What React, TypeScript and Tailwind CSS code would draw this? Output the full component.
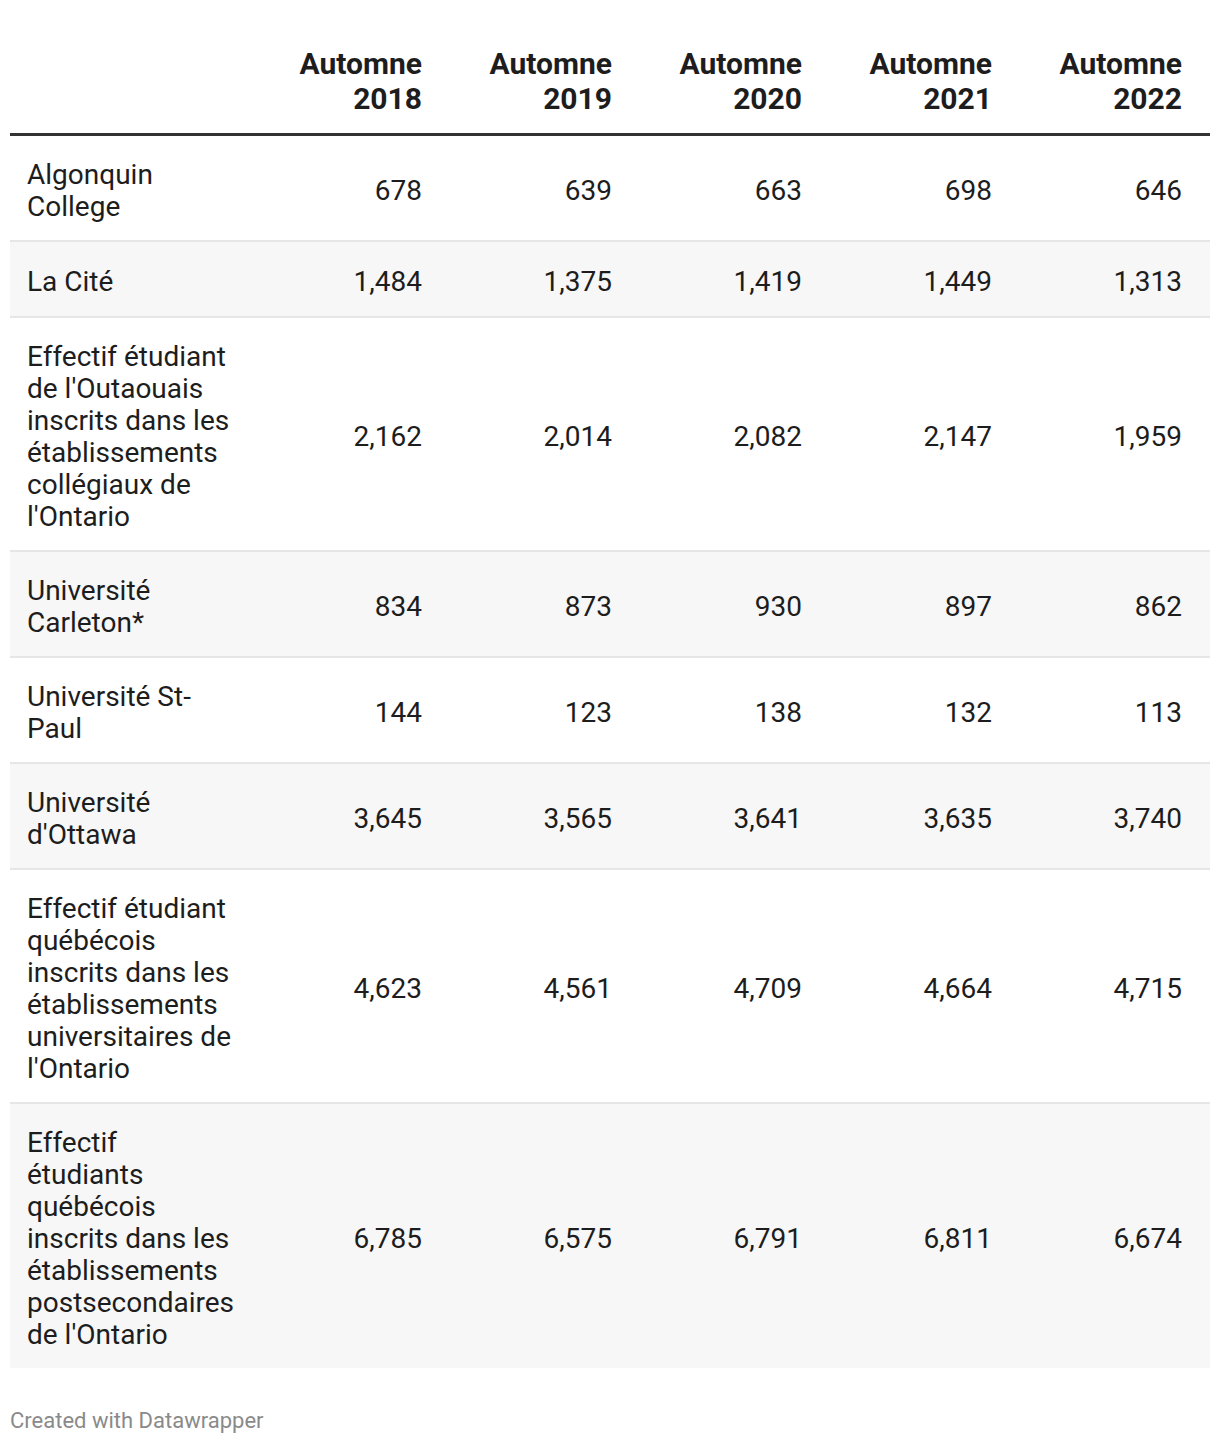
import React from 'react';

const years = ['2018', '2019', '2020', '2021', '2022'];

const rows: { label: string; values: string[] }[] = [
  { label: 'Algonquin College', values: ['678', '639', '663', '698', '646'] },
  { label: 'La Cité', values: ['1,484', '1,375', '1,419', '1,449', '1,313'] },
  {
    label: "Effectif étudiant de l'Outaouais inscrits dans les établissements collégiaux de l'Ontario",
    values: ['2,162', '2,014', '2,082', '2,147', '1,959'],
  },
  { label: 'Université Carleton*', values: ['834', '873', '930', '897', '862'] },
  { label: 'Université St-Paul', values: ['144', '123', '138', '132', '113'] },
  { label: "Université d'Ottawa", values: ['3,645', '3,565', '3,641', '3,635', '3,740'] },
  {
    label: "Effectif étudiant québécois inscrits dans les établissements universitaires de l'Ontario",
    values: ['4,623', '4,561', '4,709', '4,664', '4,715'],
  },
  {
    label: "Effectif étudiants québécois inscrits dans les établissements postsecondaires de l'Ontario",
    values: ['6,785', '6,575', '6,791', '6,811', '6,674'],
  },
];

export default function App() {
  return (
    <div className="w-[1220px] bg-white px-[10px] pt-[46px] text-[#1d1d1d]" style={{ fontFamily: 'Roboto, "Noto Sans", sans-serif' }}>
      {/* header */}
      <div className="grid grid-cols-[250px_repeat(5,190px)] border-b-[3px] border-[#333333] pb-[17px]">
        <div />
        {years.map((y) => (
          <div key={y} className="pr-[28px] text-right text-[30px] font-bold leading-[35px]">
            Automne
            <br />
            {y}
          </div>
        ))}
      </div>

      {/* body */}
      {rows.map((r, i) => (
        <div
          key={i}
          className={`grid grid-cols-[250px_repeat(5,190px)] items-center ${i % 2 === 1 ? 'bg-[#f7f7f7]' : 'bg-white'} ${i < rows.length - 1 ? 'border-b-2 border-[#e6e6e6]' : ''}`}
        >
          <div className={`pl-[17px] pr-[22px] text-[28px] leading-[32px] ${r.label === 'La Cité' ? 'pt-[24px] pb-[18px]' : 'pt-[23px] pb-[17px]'}`}>
            {r.label}
          </div>
          {r.values.map((v, j) => (
            <div key={j} className="pr-[28px] pt-[5px] text-right text-[28px] leading-[32px]">
              {v}
            </div>
          ))}
        </div>
      ))}

      <div className="pt-[40px] pb-[14px] text-[22px] leading-[26px] text-[#8a8a8a]">Created with Datawrapper</div>
    </div>
  );
}
